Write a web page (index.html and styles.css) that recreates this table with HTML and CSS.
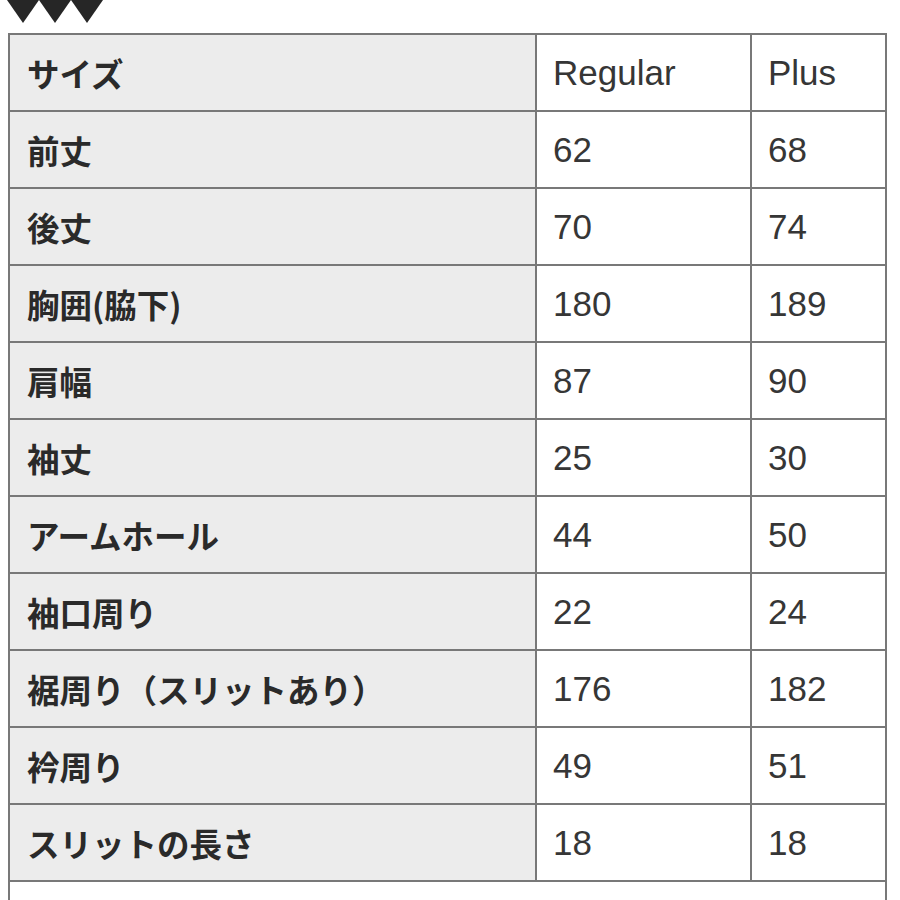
FILE: index.html
```html
<!DOCTYPE html>
<html lang="ja">
<head>
<meta charset="utf-8">
<link rel="stylesheet" href="styles.css">
</head>
<body>
<div class="marks">
  <span class="tri"></span><span class="tri"></span><span class="tri"></span>
</div>
<table class="size-table">
  <tr><th>サイズ</th><td>Regular</td><td>Plus</td></tr>
  <tr><th>前丈</th><td>62</td><td>68</td></tr>
  <tr><th>後丈</th><td>70</td><td>74</td></tr>
  <tr><th>胸囲(脇下)</th><td>180</td><td>189</td></tr>
  <tr><th>肩幅</th><td>87</td><td>90</td></tr>
  <tr><th>袖丈</th><td>25</td><td>30</td></tr>
  <tr><th>アームホール</th><td>44</td><td>50</td></tr>
  <tr><th>袖口周り</th><td>22</td><td>24</td></tr>
  <tr><th>裾周り（スリットあり）</th><td>176</td><td>182</td></tr>
  <tr><th>衿周り</th><td>49</td><td>51</td></tr>
  <tr><th>スリットの長さ</th><td>18</td><td>18</td></tr>
  <tr class="foot"><td colspan="3"></td></tr>
</table>
</body>
</html>
```
FILE: styles.css
```css
html, body {
  margin: 0;
  padding: 0;
  background: #ffffff;
  overflow: hidden;
}
body {
  padding: 0 8px;
  font-family: "Noto Sans CJK JP", "Liberation Sans", sans-serif;
  color: #2b2b2b;
}
.marks {
  display: flex;
  height: 33px;
}
.tri {
  width: 0;
  height: 0;
  border-left: 16.5px solid transparent;
  border-right: 16.5px solid transparent;
  border-top: 23px solid #262626;
}
.marks .tri:first-child {
  margin-left: -1px;
}
.size-table {
  border-collapse: separate;
  border-spacing: 0;
  border: 1px solid #787878;
  width: 879px;
  table-layout: fixed;
}
.size-table th,
.size-table td {
  border: 1px solid #787878;
  height: 77px;
  box-sizing: border-box;
  padding: 0 0 0 16px;
  vertical-align: middle;
  text-align: left;
}
.size-table th {
  width: 527px;
  background: #ececec;
  font-family: "Noto Sans CJK JP", sans-serif;
  font-weight: 700;
  font-size: 32.5px;
  padding-left: 17px;
  color: #2a2a2a;
}
.size-table td {
  font-family: "Liberation Sans", "Noto Sans CJK JP", sans-serif;
  font-weight: 400;
  font-size: 35px;
  color: #363636;
}
.size-table tr td:nth-child(2) {
  width: 215px;
}
.size-table .foot td {
  height: 40px;
}
```
